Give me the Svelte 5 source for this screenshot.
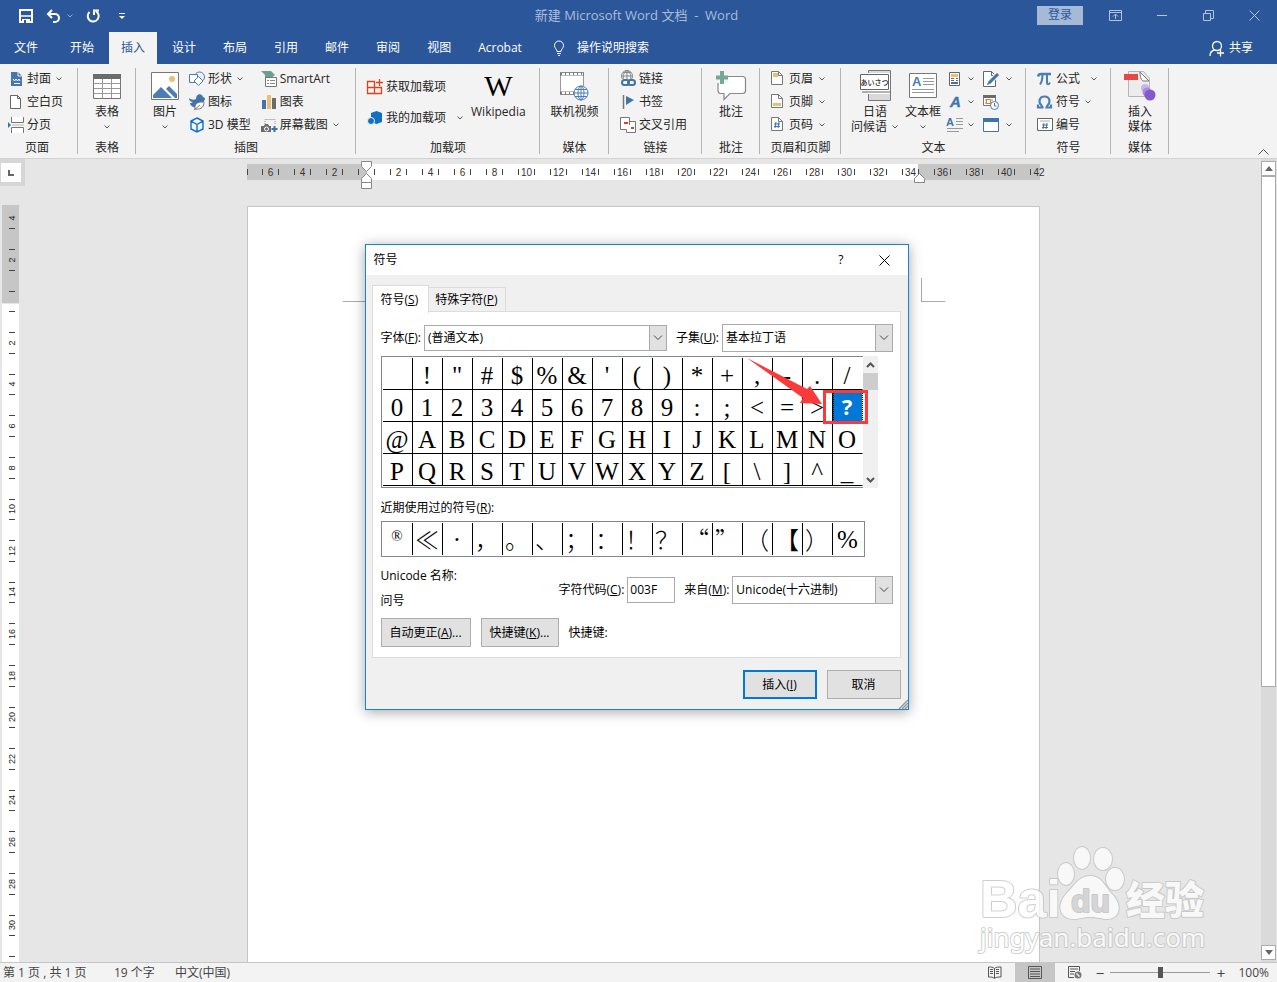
<script lang="ts">
  type Icon = { w: number; h: number; body: string };

  // name -> drawing, shared by the ribbon, the title bar and the status bar
  const icons: Record<string, Icon> = {
    save: { w: 14, h: 14, body: '<path d="M1 1h12v12H1z" fill="none" stroke="#fff" stroke-width="2"/><path d="M2 7h10" stroke="#fff" stroke-width="1.500"/><path d="M3 10h8v4H3z" fill="#fff"/><path d="M5 11h2v3H5z" fill="#2b579a"/>' },
    undo: { w: 15, h: 14, body: '<path d="M6 1 2 5l4 4M2 5h7a4 4 0 0 1 0 8H7" fill="none" stroke="#fff" stroke-width="2"/>' },
    redo: { w: 14, h: 14, body: '<path d="M3.500 3A5.500 5.500 0 1 0 10 2.300M8 6V1.500h5" fill="none" stroke="#fff" stroke-width="2"/>' },
    custom: { w: 6, h: 8, body: '<path d="M0 1.500h6" stroke="#fff"/><path d="M0 4h6L3 7z" fill="#fff"/>' },
    options: { w: 13, h: 11, body: '<path d="M.5.5h12v10H.5zM.5 2.500h12M6.500 9V4.500M4 6.500l2.500-2.500L9 6.500" fill="none" stroke="#b4c5df"/>' },
    min: { w: 11, h: 11, body: '<path d="M0 5.500h10" stroke="#b4c5df"/>' },
    restore: { w: 11, h: 11, body: '<path d="M.5 3.500h7v7h-7zM2.500 3V.5h8v8H8" fill="none" stroke="#b4c5df"/>' },
    closeApp: { w: 11, h: 11, body: '<path d="m.5.5 10 10m0-10-10 10" stroke="#b4c5df"/>' },
    bulb: { w: 12, h: 16, body: '<path d="M4 11.500C4 9 1.500 8.500 1.500 5.500a4.500 4.500 0 0 1 9 0c0 3-2.500 3.500-2.500 6zM4 13.500h4M5 15.500h2" fill="none" stroke="#fff"/>' },
    person: { w: 16, h: 17, body: '<circle cx="8" cy="6" r="4.500" fill="none" stroke="#fff" stroke-width="1.300"/><path d="M1 16c0-3 2-5.500 5-6M8 13h7M11.500 9.500v7" fill="none" stroke="#fff" stroke-width="1.300"/>' },
    cover: { w: 16, h: 16, body: '<path d="M3 1h7l4 4v10H3z" fill="#4377ad"/><path d="M10 1v4h4" fill="none" stroke="#f3f3f3"/><path d="m5 8 1.500 2L8 8l1.500 2L11 8l1 2M6 12.500h6" fill="none" stroke="#fff"/>' },
    blank: { w: 16, h: 16, body: '<path d="M2.500 1.500h7l3 3v10h-10z" fill="#fff" stroke="#666"/><path d="M9.500 1.500v3h3" fill="none" stroke="#666"/>' },
    break: { w: 16, h: 16, body: '<path d="M3.500 0v5.500h12V0M3.500 16v-5.500h12V16" fill="#fff" stroke="#777"/><path d="M4 8h12" stroke="#bbb"/><path d="m0 5 3 3-3 3z" fill="#2e75b6"/>' },
    table: { w: 28, h: 26, body: '<path d="M.5 1.500h27v24H.5z" fill="#fff" stroke="#777"/><path d="M0 1h28v5H0z" fill="#6b6b6b"/><path d="M1 10.500h26M1 15.500h26M1 20.500h26M9.500 6v19M18.500 6v19" stroke="#999"/>' },
    picture: { w: 28, h: 28, body: '<path d="M.5.5h27v27H.5z" fill="#fff" stroke="#777"/><circle cx="21" cy="7" r="3" fill="#e8bf74"/><path d="M2 26v-3l8-8 11 11z" fill="#4a7db5"/><path d="m15 17 3-3 8 8v4h-2z" fill="#4a7db5"/>' },
    shapes: { w: 16, h: 16, body: '<circle cx="10.500" cy="6" r="5" fill="#f3f3f3" stroke="#4a7db5"/><path d="M.5 3.500h8v8h-8z" fill="#fff" stroke="#4a7db5"/><path d="m9.500 5.500 4.500 4.500-4.500 4.500L5 10z" fill="#fff" stroke="#4a7db5"/>' },
    iconsPic: { w: 16, h: 16, body: '<path d="M0 4c2 2 5 2 7 1 0-6 6-6 7-2l2 1c0 5-6 7-9 10-4-1-6-3-6-5 0 0 2 0 3-1C1 8 0 6 0 4z" fill="#3f74ad"/><path d="M6 15c-1-7 5-7 9-7 0 4-2 8-9 7z" fill="#fff" stroke="#777"/><path d="m5 16 6-5" stroke="#777"/>' },
    cube: { w: 16, h: 16, body: '<path d="m8 1 6 3v8l-6 3-6-3V4zM2 4l6 3.500L14 4M8 7.500V15" fill="none" stroke="#1070c0" stroke-width="1.400"/>' },
    smartart: { w: 17, h: 16, body: '<path d="M1 0h10l4 4-4 3H8v3H5V4z" fill="#6ba08e"/><path d="M5.500 6.500h11v9h-11z" fill="#fff" stroke="#777"/><path d="M7 9.500h2M10 9.500h5M7 12.500h2M10 12.500h5" stroke="#888"/>' },
    chart: { w: 16, h: 16, body: '<path d="M1 6h4v9H1z" fill="#3f74ad"/><path d="M6 1h4v14H6z" fill="#e8bf74"/><path d="M11 4h4v11h-4z" fill="#6b6b6b"/>' },
    screenshot: { w: 16, h: 16, body: '<path d="M4 7V2.500h10V8" fill="none" stroke="#888" stroke-dasharray="1 1"/><path d="M0 9h3l1-2h3l1 2h2v6H0z" fill="#6b6b6b"/><circle cx="5.500" cy="12" r="2" fill="none" stroke="#fff"/><path d="M13.500 9v6M10.500 12h6" stroke="#2e75b6" stroke-width="2"/>' },
    getaddin: { w: 16, h: 16, body: '<path d="M.5 2.500h7v6h-7zM.5 8.500h7v6h-7zM7.500 8.500h7v6h-7zM12.500 0v7M9 3.500h7" fill="none" stroke="#d8431f" stroke-width="1.300"/>' },
    myaddin: { w: 16, h: 16, body: '<path d="m9.500 1 5.500 2v9l-5.500 2L4 12V3z" fill="#0f70c4"/><circle cx="4" cy="11" r="3.500" fill="#0f70c4" stroke="#f3f3f3"/>' },
    video: { w: 30, h: 30, body: '<path d="M1.500 1.500h23v22h-23z" fill="#fff" stroke="#999"/><path d="M1 3h24M1 22h24" stroke="#777" stroke-width="3"/><path d="M3 3h21M3 22h21" stroke="#fff" stroke-width="2" stroke-dasharray="3 1"/><circle cx="22" cy="22" r="7" fill="#fff" stroke="#4a7db5"/><ellipse cx="22" cy="22" rx="3" ry="7" fill="none" stroke="#4a7db5"/><path d="M15 22h14M16 18.500h12M16 25.500h12M22 15v14" stroke="#4a7db5"/>' },
    link: { w: 16, h: 17, body: '<circle cx="7" cy="6" r="5.500" fill="none" stroke="#888"/><path d="M1 6h12M7 0v12M3 2.500h8M4 10c-2-4 0-8 3-9.500C10 2 12 6 10 10" fill="none" stroke="#888"/><path d="M0 9h16v8H0z" fill="#f3f3f3"/><rect x="2" y="10" width="7" height="5" rx="2.500" fill="none" stroke="#3f74ad" stroke-width="2"/><rect x="8" y="10" width="7" height="5" rx="2.500" fill="none" stroke="#3f74ad" stroke-width="2"/>' },
    bookmark: { w: 16, h: 16, body: '<path d="M3.500 1v14" stroke="#777" stroke-width="1.500"/><path d="m6 2 8 4-8 5z" fill="#3f74ad"/>' },
    crossref: { w: 16, h: 16, body: '<path d="M.5.5h9v12h-9z" fill="#fff" stroke="#777"/><path d="M7.500 4.500h8v11h-9v-3" fill="#fff" stroke="#777"/><path d="M6 4h4v8H6z" fill="#fff"/><path d="M9.500 1v7" stroke="#777"/><path d="M4 5h4v2H4zM11 10h3v2h-3z" fill="#d8431f"/>' },
    comment: { w: 32, h: 30, body: '<path d="M4.500 5.500h23a3 3 0 0 1 3 3v11a3 3 0 0 1-3 3H15l-6 6v-6H5a3 3 0 0 1-2-3V9z" fill="#fff" stroke="#888" stroke-width="1.200"/><path d="M0 4h13v8H0z" fill="#f3f3f3"/><path d="M7 0v13M1 6.500h12" stroke="#74a897" stroke-width="4"/>' },
    header: { w: 12, h: 15, body: '<path d="M.5.500h7l4 4v9H.5z" fill="#fff" stroke="#777"/><path d="M2 2h5v4H2z" fill="#e8bf74"/><path d="M7.500.5v4h4" fill="none" stroke="#777"/>' },
    footer: { w: 12, h: 15, body: '<path d="M.5.500h7l4 4v9H.5z" fill="#fff" stroke="#777"/><path d="M2 9h8v3H2z" fill="#e8bf74"/><path d="M7.500.5v4h4" fill="none" stroke="#777"/>' },
    pagenum: { w: 12, h: 15, body: '<path d="M.5.500h7l4 4v9H.5z" fill="#fff" stroke="#777"/><path d="M7.500.5v4h4" fill="none" stroke="#777"/><path d="M5 5 4 11M8 5l-1 6M3 7h6M3 9.500h6" stroke="#3f74ad"/>' },
    greeting: { w: 32, h: 32, body: '<path d="M9.500.5h22v30h-22z" fill="#d9d9d9" stroke="#777"/><path d="M9 3h22v21H9z" fill="#fff"/><path d="M1.500 4.500h28v15h-28z" fill="#fff" stroke="#666"/><path d="M3 22h29" stroke="#666"/><text x="15.500" y="15" text-anchor="middle" font-size="7" font-weight="500" font-family="Noto Sans CJK JP, sans-serif" fill="#222">あいさつ</text>' },
    textbox: { w: 28, h: 26, body: '<path d="M.5.5h27v24H.5z" fill="#fff" stroke="#777"/><text x="3" y="13" font-size="13" font-weight="700" font-family="Liberation Sans, sans-serif" fill="#4a7db5">A</text><path d="M14 5.500h11M14 8.500h11M14 11.500h11M3 16.500h22M3 19.500h22" stroke="#999"/>' },
    quickparts: { w: 16, h: 16, body: '<path d="M2.500 1.500h10v13h-10z" fill="#fff" stroke="#666"/><path d="M4 3h7v3H4z" fill="#e8bf74"/><path d="M4 7.500h3M4 9.500h3M9 7.500h2M9 9.500h2" stroke="#666"/><path d="M4 11h7v2H4z" fill="#3f74ad"/>' },
    wordart: { w: 16, h: 16, body: '<text x="3" y="13" font-size="15" font-weight="700" font-style="italic" font-family="Liberation Sans, sans-serif" fill="#3f74ad" stroke="#3f74ad" stroke-width=".4">A</text>' },
    dropcap: { w: 16, h: 16, body: '<text x="-1" y="9" font-size="11" font-weight="700" font-family="Liberation Sans, sans-serif" fill="#3f74ad">A</text><path d="M9 1.500h7M9 4.500h7M9 7.500h7M0 11.500h16M0 14.500h12" stroke="#999"/>' },
    signature: { w: 16, h: 16, body: '<path d="M.5.5h8l4 4v11H.5z" fill="#fff" stroke="#666"/><path d="M8.500.5v4h4" fill="none" stroke="#666"/><path d="m14 4-8 8" stroke="#f3f3f3" stroke-width="5"/><path d="m15 3-9 9" stroke="#3f74ad" stroke-width="3"/><path d="m4 14 1-3 2 2z" fill="#3f74ad"/>' },
    datetime: { w: 16, h: 16, body: '<path d="M.5 1.500h12v10H.5z" fill="#fff" stroke="#777"/><path d="M0 1h13v3H0z" fill="#6b6b6b"/><path d="M2 6h9M2 9h9" stroke="#888" stroke-dasharray="2 1"/><path d="M3.500 5.500h4v4h-4z" fill="#fff" stroke="#d87a2a"/><circle cx="11.500" cy="11.500" r="4" fill="#fff" stroke="#4a7db5"/><path d="M11.500 9v3h2" fill="none" stroke="#4a7db5"/>' },
    object: { w: 16, h: 14, body: '<path d="M.5.5h15v13H.5z" fill="#fff" stroke="#3f74ad"/><path d="M0 0h16v4H0z" fill="#3f74ad"/>' },
    pi: { w: 16, h: 16, body: '<path d="M1 5.500C1.500 3 2.500 3 4 3h10" fill="none" stroke="#4a7db5" stroke-width="2.400"/><path d="M5.500 3c0 5-.5 8-2.500 10.500M10 3v8c0 3 2 3 3 .5" fill="none" stroke="#4a7db5" stroke-width="2"/>' },
    omega: { w: 16, h: 16, body: '<path d="M1 10.500v3h4.500c0-2-3-3-3-6C2.500 4 5 2.500 7.500 2.500S12.500 4 12.500 7.500c0 3-3 4-3 6H14v-3" fill="none" stroke="#4a7db5" stroke-width="2.200"/>' },
    number: { w: 16, h: 14, body: '<path d="M.5.5h15v12H.5z" fill="#fff" stroke="#666"/><path d="M3 3h10" stroke="#aaa"/><path d="m7 5-1 6M10 5l-1 6M5 7h6M5 9.500h6" stroke="#3f74ad"/>' },
    media: { w: 32, h: 32, body: '<path d="M4.500 1.500h15l6 7v18h-21z" fill="#ececec" stroke="#b5b5b5"/><path d="m16 2 9 9h-6c-2-1-3-5-3-9z" fill="#fff" stroke="#777"/><path d="M0 4h14v6H0z" fill="#e8474a"/><circle cx="21" cy="18" r="4" fill="#c9b5ea"/><circle cx="23" cy="22" r="4.500" fill="#ab8adf"/><circle cx="26" cy="25" r="5.500" fill="#8458cf"/>' },
    book: { w: 14, h: 13, body: '<path d="M6.500 2.500C5 1 3 1 .5 1v10c2.500 0 4.500 0 6 1.500C8 11 10 11 13 11V1c-3 0-5 0-6.500 1.500zM6.500 2v10M2 3.500h3M2 5.500h3M2 7.500h3M8 3.500h3M8 5.500h3M8 7.500h3" fill="none" stroke="#555"/>' },
    print: { w: 14, h: 13, body: '<path d="M.5.5h13v12H.5zM2 3h10M2 5.500h10M2 8h10M2 10.500h10" fill="none" stroke="#555"/>' },
    web: { w: 14, h: 13, body: '<path d="M6 11.500H.5V.5h11V5M2 3h8M2 5.500h5M2 8h4" fill="none" stroke="#555"/><circle cx="10" cy="9" r="3.500" fill="#777"/><path d="M8 8h2v2h2" stroke="#fff" fill="none"/>' },
  };

  const tabs = ["开始", "插入", "设计", "布局", "引用", "邮件", "审阅", "视图", "Acrobat"];
  let activeTab = $state("插入");

  const grid = [
    ..." !\"#$%&'()*+,-./",
    ..."0123456789:;<=>?",
    ..."@ABCDEFGHIJKLMNO",
    ..."PQRSTUVWXYZ[\\]^_",
  ];
  const recent = ["®", "≪", "·", "，", "。", "、", "；", "：", "！", "？", "“", "”", "（", "【", "）", "%"];
  let selected = $state("?");
  let code = $state("003F");
  let zoom = $state(50);

  const hRuler = [6, 4, 2, 0, ...Array.from({ length: 21 }, (_, i) => (i + 1) * 2)];
  const vRuler = Array.from({ length: 18 }, (_, i) => ({
    label: Math.abs(i - 2) * 2,
    y: Math.round(13 + i * 41.6),
  }));

  function pick(ch: string) {
    selected = ch;
    code = ch.charCodeAt(0).toString(16).toUpperCase().padStart(4, "0");
  }
</script>

{#snippet icon(name: string)}
  <svg class="icon" width={icons[name].w} height={icons[name].h} viewBox="0 0 {icons[name].w} {icons[name].h}" aria-hidden="true">
    {@html icons[name].body}
  </svg>
{/snippet}

{#snippet caret()}
  <svg class="caret" width="6" height="4" viewBox="0 0 6 4" aria-hidden="true"><path d="m.5.5 2.500 2.500L5.500.5" fill="none" stroke="currentColor" /></svg>
{/snippet}

{#snippet small(name: string, label: string, drop: boolean = false)}
  <button class="small" aria-label={label || name}>
    <span class="slot">{@render icon(name)}</span>
    {#if label}<span>{label}</span>{/if}
    {#if drop}{@render caret()}{/if}
  </button>
{/snippet}

{#snippet big(name: string, label: string, drop: boolean = false)}
  <button class="big">
    <span class="bigslot">{@render icon(name)}</span>
    <span class="biglabel">{label}</span>
    {#if drop}{@render caret()}{/if}
  </button>
{/snippet}

{#snippet arrow()}
  <span class="arrow"><svg width="10" height="6" viewBox="0 0 10 6"><path d="m1 .5 4 4 4-4" fill="none" stroke="#444" /></svg></span>
{/snippet}

<div class="app">
  <header class="title">
    <div class="qat">
      <button aria-label="保存">{@render icon("save")}</button>
      <button class="undo" aria-label="撤消">{@render icon("undo")}{@render caret()}</button>
      <button aria-label="重复">{@render icon("redo")}</button>
      <button class="custom" aria-label="自定义">{@render icon("custom")}</button>
    </div>
    <div class="doc">新建 Microsoft Word 文档  -  Word</div>
    <div class="win">
      <button class="login">登录</button>
      <button aria-label="功能区显示选项">{@render icon("options")}</button>
      <button aria-label="最小化">{@render icon("min")}</button>
      <button aria-label="还原">{@render icon("restore")}</button>
      <button aria-label="关闭">{@render icon("closeApp")}</button>
    </div>
  </header>

  <nav class="tabs">
    <button class="tab file">文件</button>
    {#each tabs as tab}
      <button class="tab" class:active={tab === activeTab} onclick={() => (activeTab = tab)}>{tab}</button>
    {/each}
    <button class="tab tell">{@render icon("bulb")}操作说明搜索</button>
    <button class="tab share">{@render icon("person")}共享</button>
  </nav>

  <section class="ribbon">
    <div class="group g-page">
      <div class="tools">
        <div class="col">
          {@render small("cover", "封面", true)}
          {@render small("blank", "空白页")}
          {@render small("break", "分页")}
        </div>
      </div>
      <div class="name">页面</div>
    </div>
    <div class="group g-table">
      <div class="tools mid">{@render big("table", "表格", true)}</div>
      <div class="name">表格</div>
    </div>
    <div class="group g-illus">
      <div class="tools">
        {@render big("picture", "图片", true)}
        <div class="col">
          {@render small("shapes", "形状", true)}
          {@render small("iconsPic", "图标")}
          {@render small("cube", "3D 模型")}
        </div>
        <div class="col second">
          {@render small("smartart", "SmartArt")}
          {@render small("chart", "图表")}
          {@render small("screenshot", "屏幕截图", true)}
        </div>
      </div>
      <div class="name">插图</div>
    </div>
    <div class="group g-addin">
      <div class="tools">
        <div class="col two">
          {@render small("getaddin", "获取加载项")}
          {@render small("myaddin", "我的加载项", true)}
        </div>
        <button class="big">
          <span class="bigslot wiki">W</span>
          <span class="biglabel">Wikipedia</span>
        </button>
      </div>
      <div class="name">加载项</div>
    </div>
    <div class="group g-video">
      <div class="tools mid">{@render big("video", "联机视频")}</div>
      <div class="name">媒体</div>
    </div>
    <div class="group g-link">
      <div class="tools">
        <div class="col">
          {@render small("link", "链接")}
          {@render small("bookmark", "书签")}
          {@render small("crossref", "交叉引用")}
        </div>
      </div>
      <div class="name">链接</div>
    </div>
    <div class="group g-table">
      <div class="tools mid">{@render big("comment", "批注")}</div>
      <div class="name">批注</div>
    </div>
    <div class="group g-head">
      <div class="tools">
        <div class="col">
          {@render small("header", "页眉", true)}
          {@render small("footer", "页脚", true)}
          {@render small("pagenum", "页码", true)}
        </div>
      </div>
      <div class="name">页眉和页脚</div>
    </div>
    <div class="group g-text">
      <div class="tools">
        <button class="big greet">
          <span class="bigslot">{@render icon("greeting")}</span>
          <span class="biglabel">日语</span>
          <span class="biglabel last">问候语{@render caret()}</span>
        </button>
        {@render big("textbox", "文本框", true)}
        <div class="col">
          {@render small("quickparts", "", true)}
          {@render small("wordart", "", true)}
          {@render small("dropcap", "", true)}
        </div>
        <div class="col objs">
          {@render small("signature", "", true)}
          {@render small("datetime", "")}
          {@render small("object", "", true)}
        </div>
      </div>
      <div class="name">文本</div>
    </div>
    <div class="group g-sym">
      <div class="tools">
        <div class="col">
          <div class="wide">{@render small("pi", "公式", true)}</div>
          {@render small("omega", "符号", true)}
          {@render small("number", "编号")}
        </div>
      </div>
      <div class="name">符号</div>
    </div>
    <div class="group g-media">
      <div class="tools mid">
        <button class="big">
          <span class="bigslot">{@render icon("media")}</span>
          <span class="biglabel">插入</span>
          <span class="biglabel">媒体</span>
        </button>
      </div>
      <div class="name">媒体</div>
    </div>
    <button class="collapse" aria-label="折叠功能区">
      <svg width="11" height="6" viewBox="0 0 11 6"><path d="m.5 5.500 5-5 5 5" fill="none" stroke="#555" /></svg>
    </button>
  </section>

  <main class="work">
    <div class="left">
      <div class="corner"><span><svg width="6" height="6" viewBox="0 0 6 6"><path d="M1 0v5h5" fill="none" stroke="#666" stroke-width="2" /></svg></span></div>
      <svg class="vruler" width="17" height="757">
        <rect width="17" height="98" fill="#c6c6c6" />
        <rect y="99" width="17" height="658" fill="#fff" />
        {#each vRuler as mark}
          {#if mark.label}
            <text transform="translate(13 {mark.y}) rotate(-90)" text-anchor="middle">{mark.label}</text>
          {/if}
          <path d="M7 {mark.y + 10}.5h6M7 {mark.y + 31}.5h6" stroke="#444" />
        {/each}
      </svg>
    </div>
    <div class="canvas">
      <div class="hruler">
        <i class="lead"></i>
        {#each hRuler as n, i}
          <span class="unit" class:end={i === hRuler.length - 1}>{n || ""}</span>
        {/each}
        <svg class="indent" width="13" height="28" viewBox="0 0 13 28"><path d="M1.500.5h10v5l-5 5-5-5zM6.500 12.500l5 5v4h-10v-4zM1.500 21.500h10v6h-10z" fill="#fff" stroke="#888" /></svg>
        <svg class="indent right" width="13" height="10" viewBox="0 0 13 10"><path d="m6.500.5 5 5v4h-10v-4z" fill="#fff" stroke="#888" /></svg>
      </div>
      <div class="page">
        <i class="crop tl"></i>
        <i class="crop tr"></i>
      </div>
    </div>
    <div class="scroll">
      <button aria-label="向上滚动"><svg width="8" height="5" viewBox="0 0 8 5"><path d="M0 5h8L4 0z" fill="#666" /></svg></button>
      <div class="thumb"></div>
      <button aria-label="向下滚动"><svg width="8" height="5" viewBox="0 0 8 5"><path d="M0 0h8L4 5z" fill="#666" /></svg></button>
    </div>
  </main>

  <footer class="status">
    <span class="pages">第 1 页 , 共 1 页</span>
    <span class="words">19 个字</span>
    <span>中文(中国)</span>
    <div class="views">
      <button aria-label="阅读视图">{@render icon("book")}</button>
      <button class="on" aria-label="页面视图">{@render icon("print")}</button>
      <button aria-label="Web 版式视图">{@render icon("web")}</button>
    </div>
    <button class="step" aria-label="缩小">−</button>
    <input class="zoom" type="range" aria-label="缩放" bind:value={zoom} />
    <button class="step" aria-label="放大">+</button>
    <span class="pct">100%</span>
  </footer>

  <div class="dialog" role="dialog" aria-label="符号">
    <div class="dtitle">
      <span>符号</span>
      <button aria-label="帮助">?</button>
      <button aria-label="关闭"><svg width="11" height="11" viewBox="0 0 11 11"><path d="m.5.5 10 10m0-10-10 10" stroke="#000" /></svg></button>
    </div>
    <div class="dbody">
      <div class="dtabs">
        <button class="dtab on">符号(<u>S</u>)</button>
        <button class="dtab">特殊字符(<u>P</u>)</button>
      </div>
      <div class="panel">
        <div class="line fonts">
          <label for="font">字体(<u>F</u>):</label>
          <div class="select font"><select id="font"><option>(普通文本)</option></select>{@render arrow()}</div>
          <label for="subset">子集(<u>U</u>):</label>
          <div class="select tall grow"><select id="subset"><option>基本拉丁语</option></select>{@render arrow()}</div>
        </div>
        <div class="chars">
          <div class="grid">
            {#each grid as ch}
              <button class="cell" class:sel={ch === selected} onclick={() => pick(ch)}>{ch}</button>
            {/each}
          </div>
          <div class="cscroll">
            <button aria-label="向上"><svg width="9" height="6" viewBox="0 0 9 6"><path d="m1 5 3.500-3.500L8 5" fill="none" stroke="#555" stroke-width="2" /></svg></button>
            <div class="cthumb"></div>
            <button aria-label="向下"><svg width="9" height="6" viewBox="0 0 9 6"><path d="m1 1 3.500 3.500L8 1" fill="none" stroke="#555" stroke-width="2" /></svg></button>
          </div>
          <div class="frame"></div>
          <svg class="pointer" width="76" height="48" viewBox="0 0 76 48"><path d="M0 0 60 31l3-3 12 18-22-1 3-5z" fill="#f93b3b" /></svg>
        </div>
        <div class="rlabel">近期使用过的符号(<u>R</u>):</div>
        <div class="recent">
          {#each recent as ch, i}
            <button class="cell" class:reg={i === 0} class:latin={i === 2 || i === 15} onclick={() => pick(ch)}>{ch}</button>
          {/each}
        </div>
        <div class="line info">
          <div class="uname"><span>Unicode 名称:</span><span>问号</span></div>
          <label for="code">字符代码(<u>C</u>):</label>
          <input id="code" class="code" bind:value={code} />
          <label for="from">来自(<u>M</u>):</label>
          <div class="select tall from"><select id="from"><option>Unicode(十六进制)</option></select>{@render arrow()}</div>
        </div>
        <div class="line keys">
          <button class="btn auto">自动更正(<u>A</u>)...</button>
          <button class="btn">快捷键(<u>K</u>)...</button>
          <span>快捷键:</span>
        </div>
      </div>
      <div class="actions">
        <button class="btn primary">插入(<u>I</u>)</button>
        <button class="btn">取消</button>
      </div>
      <svg class="grip" width="10" height="10" viewBox="0 0 10 10"><path d="m1 10 9-9M4 10l6-6M7 10l3-3" stroke="#999" stroke-width="1.500" /></svg>
    </div>
  </div>

  <svg class="mark" width="240" height="115" viewBox="0 0 240 115">
    <g fill="#fff" stroke="#c0c0c0" stroke-width="2" stroke-linejoin="round" paint-order="stroke">
      <text x="6" y="72" font-family="Liberation Sans, sans-serif" font-weight="700" font-size="52">Bai</text>
      <ellipse cx="92" cy="29" rx="8" ry="11" />
      <ellipse cx="108" cy="13" rx="8" ry="11" />
      <ellipse cx="129" cy="14" rx="9" ry="11" />
      <ellipse cx="141" cy="34" rx="9" ry="11" />
      <path d="M116 31c12 0 14 10 22 18 10 10 9 24-4 25-7 0-10-2-18-2s-10 2-17 2c-15-1-16-16-6-26 8-8 12-17 23-17z" />
      <text class="du" x="97" y="67" font-family="Liberation Sans, sans-serif" font-weight="700" font-size="32">du</text>
      <text x="152" y="69" font-family="Noto Sans CJK SC, sans-serif" font-weight="900" font-size="39">经验</text>
      <text x="6" y="102" font-family="Noto Sans, sans-serif" font-size="26">jingyan.baidu.com</text>
    </g>
  </svg>
</div>

<style>
  :global(body) {
    margin: 0;
  }
  .app {
    position: relative;
    display: flex;
    flex-direction: column;
    height: 100vh;
    overflow: hidden;
    background: #e6e6e6;
    color: #262626;
    font: 12px/16px "Open Sans", "Noto Sans CJK SC", sans-serif;
  }
  button {
    border: 0;
    padding: 0;
    background: none;
    color: inherit;
    font: inherit;
    white-space: nowrap;
  }
  .icon,
  .caret {
    display: block;
    flex: none;
    overflow: visible;
  }
  .caret {
    color: #555;
  }

  .title {
    display: grid;
    grid-template-columns: 1fr auto 1fr;
    align-items: center;
    height: 32px;
    background: #2b579a;
    color: #a9bddb;
  }
  .doc {
    white-space: pre;
    padding-right: 4px;
    padding-bottom: 2px;
    font-size: 13px;
  }
  .qat {
    display: flex;
    align-items: center;
    gap: 13px;
    padding-left: 19px;
  }
  .qat .undo {
    display: flex;
    align-items: center;
    gap: 6px;
  }
  .qat .caret {
    color: #8fa9cf;
  }
  .qat .custom {
    margin-left: 6px;
  }
  .win {
    display: flex;
    justify-content: flex-end;
    align-items: center;
    gap: 35px;
    padding-right: 17px;
    padding-bottom: 2px;
  }
  .win .login {
    width: 46px;
    height: 19px;
    margin-right: -9px;
    background: #a6b9d6;
    color: #2b579a;
  }

  .tabs {
    display: flex;
    gap: 3px;
    height: 32px;
    background: #2b579a;
    color: #fff;
  }
  .tab {
    padding: 0 12px;
  }
  .tab.file {
    padding: 0 17px 0 14px;
  }
  .tab.active {
    background: #f3f3f3;
    color: #2b579a;
  }
  .tell,
  .share {
    display: flex;
    align-items: center;
    gap: 12px;
  }
  .tell {
    margin-left: 4px;
  }
  .share {
    gap: 4px;
    margin-left: auto;
    padding-right: 24px;
  }

  .ribbon {
    display: flex;
    height: 94px;
    flex: none;
    background: #f3f3f3;
    border-bottom: 1px solid #d2d2d2;
  }
  .group {
    box-sizing: border-box;
    position: relative;
    display: flex;
    flex-direction: column;
    flex: none;
    padding-top: 3px;
  }
  .group::after {
    content: "";
    position: absolute;
    right: 0;
    top: 4px;
    bottom: 4px;
    width: 1px;
    background: #b5b5b5;
  }
  .tools {
    display: flex;
    height: 73px;
  }
  .tools.mid {
    justify-content: center;
  }
  .name {
    text-align: center;
  }
  .col {
    display: flex;
    flex-direction: column;
  }
  .small {
    display: flex;
    align-items: center;
    gap: 3px;
    height: 23px;
  }
  .small .caret {
    margin-left: 2px;
  }
  .slot {
    display: flex;
    justify-content: center;
    width: 16px;
  }
  .big {
    display: flex;
    flex-direction: column;
    align-items: center;
  }
  .bigslot {
    display: flex;
    align-items: center;
    height: 37px;
  }
  .biglabel {
    position: relative;
    line-height: 15px;
  }
  .big > .caret {
    margin-top: 6px;
  }
  .biglabel.last .caret {
    position: absolute;
    left: calc(100% + 5px);
    top: 6px;
  }
  .g-page {
    width: 78px;
    padding-left: 8px;
  }
  .g-page .name {
    padding-right: 12px;
  }
  .g-table,
  .g-media {
    width: 58px;
  }
  .g-illus {
    width: 220px;
  }
  .g-illus .big {
    width: 44px;
    margin: 0 2px 0 7px;
  }
  .second {
    margin-left: 10px;
  }
  .g-addin {
    width: 184px;
  }
  .g-addin .tools {
    padding-left: 11px;
    gap: 8px;
  }
  .two {
    padding-top: 4px;
  }
  .two .small {
    height: 31px;
  }
  .two .caret {
    margin-left: 8px;
  }
  .wiki {
    font: 30px/37px "Liberation Serif", serif;
    color: #000;
  }
  .g-video {
    width: 69px;
  }
  .g-link {
    width: 93px;
  }
  .g-link .tools {
    padding-left: 11px;
  }
  .g-head {
    width: 81px;
  }
  .g-head .tools {
    padding-left: 9px;
  }
  .g-head .small {
    gap: 4px;
  }
  .g-text {
    width: 185px;
  }
  .g-text .tools {
    padding-left: 10px;
  }
  .greet {
    width: 48px;
    margin-right: 6px;
  }
  .greet .last {
    margin-right: 12px;
  }
  .g-text .col {
    margin-left: 6px;
  }
  .g-text .col.objs {
    margin-left: 9px;
  }
  .g-text .objs .caret {
    margin-left: 4px;
  }
  .g-sym {
    width: 85px;
  }
  .g-sym .tools {
    padding-left: 11px;
  }
  .wide .caret {
    margin-left: 8px;
  }
  .collapse {
    align-self: flex-end;
    margin: 0 8px 3px auto;
    line-height: 0;
  }

  .work {
    display: flex;
    flex: 1;
    min-height: 0;
  }
  .left {
    width: 26px;
    flex: none;
  }
  .corner {
    box-sizing: border-box;
    width: 25px;
    height: 27px;
    padding: 4px 4px 4px 1px;
    background: #d6d6d6;
  }
  .corner span {
    display: flex;
    align-items: center;
    justify-content: center;
    height: 19px;
    background: #fdfdfd;
  }
  .vruler {
    display: block;
    margin: 19px 0 0 2px;
    font: 9px "Liberation Sans", sans-serif;
    fill: #222;
  }
  .canvas {
    flex: 1;
    display: flex;
    flex-direction: column;
    align-items: center;
    overflow: hidden;
  }
  .hruler {
    position: relative;
    display: flex;
    align-items: center;
    flex: none;
    width: 793px;
    height: 16px;
    margin-top: 5px;
    background: linear-gradient(90deg, #c6c6c6 120px, #fff 120px 671px, #c6c6c6 671px);
    color: #333;
  }
  .lead {
    flex: none;
    width: 1px;
    height: 6px;
    margin-right: 14px;
    background: #444;
  }
  .unit {
    box-sizing: border-box;
    flex: none;
    width: 17px;
    height: 6px;
    margin-right: 15px;
    border: solid #444;
    border-width: 0 1px;
    font: 10px/8px "Liberation Sans", sans-serif;
    display: flex;
    justify-content: center;
  }
  .unit.end {
    border-right: 0;
    margin-right: 0;
  }
  .indent {
    position: absolute;
    left: 113px;
    top: -3px;
  }
  .indent.right {
    left: 666px;
    top: 9px;
  }
  .page {
    position: relative;
    box-sizing: border-box;
    width: 793px;
    flex: 1;
    margin-top: 26px;
    background: #fff;
    border: 1px solid #c6c6c6;
    border-bottom: 0;
  }
  .crop {
    position: absolute;
    top: 71px;
    width: 23px;
    height: 23px;
    border: solid #aaa;
  }
  .tl {
    left: 95px;
    border-width: 0 1px 1px 0;
  }
  .tr {
    right: 94px;
    border-width: 0 0 1px 1px;
  }
  .scroll {
    display: flex;
    flex-direction: column;
    flex: none;
    width: 15px;
    padding: 2px 1px 2px 0;
    background: linear-gradient(#dadada, #dadada) 0 0 / 15px 100% no-repeat;
  }
  .scroll button {
    box-sizing: border-box;
    height: 15px;
    border: 1px solid #ababab;
    background: #fff;
    line-height: 0;
    display: flex;
    align-items: center;
    justify-content: center;
  }
  .scroll button:last-child {
    margin-top: auto;
  }
  .thumb {
    box-sizing: border-box;
    height: 64%;
    background: #fff;
    border: 1px solid #ababab;
  }

  .status {
    display: flex;
    align-items: center;
    flex: none;
    gap: 19px;
    height: 19px;
    padding: 0 8px 0 3px;
    background: #f3f3f3;
    border-top: 1px solid #c6c6c6;
    color: #444;
  }
  .pages {
    min-width: 92px;
  }
  .words {
    min-width: 42px;
  }
  .views {
    display: flex;
    align-self: stretch;
    margin-left: auto;
    margin-right: -13px;
  }
  .views button {
    width: 40px;
    display: flex;
    align-items: center;
    justify-content: center;
  }
  .views .on {
    background: #c6c6c6;
  }
  .step {
    width: 11px;
    margin: 0 -7px;
    font-size: 15px;
  }
  .zoom {
    appearance: none;
    width: 100px;
    height: 12px;
    margin: 0 -7px;
    background: linear-gradient(#999, #999) center / 100% 1px no-repeat;
  }
  .zoom::-webkit-slider-thumb {
    appearance: none;
    width: 5px;
    height: 11px;
    background: #555;
  }

  .dialog {
    position: absolute;
    left: calc(50% - 274px);
    top: 244px;
    box-sizing: border-box;
    width: 544px;
    border: 1px solid #1883d7;
    background: #f0f0f0;
    color: #000;
    box-shadow: 0 2px 12px rgba(0, 0, 0, 0.35);
  }
  .dtitle {
    display: flex;
    align-items: center;
    height: 30px;
    padding: 0 18px 0 8px;
    background: #fff;
    gap: 35px;
  }
  .dtitle span {
    margin-right: auto;
  }
  .dtitle button {
    line-height: 0;
  }
  .dbody {
    position: relative;
    padding: 9px 7px 10px 6px;
  }
  .dtabs {
    display: flex;
    align-items: flex-end;
    height: 28px;
  }
  .dtab {
    box-sizing: border-box;
    height: 25px;
    padding: 0 7px 0 6px;
    border: 1px solid #dcdcdc;
    border-left: 0;
  }
  .dtab.on {
    position: relative;
    height: 28px;
    margin-bottom: -1px;
    padding: 0 10px 0 8px;
    border-left: 1px solid #dcdcdc;
    border-bottom: 0;
    background: #fff;
    z-index: 1;
  }
  .panel {
    box-sizing: border-box;
    height: 347px;
    margin-top: -1px;
    padding: 12px 7px 10px 8px;
    background: #fff;
    border: 1px solid #dcdcdc;
  }
  .line {
    display: flex;
    align-items: center;
  }
  .fonts {
    height: 28px;
    gap: 3px;
  }
  .select {
    position: relative;
    box-sizing: border-box;
    height: 26px;
    border: 1px solid #ababab;
  }
  .select select {
    appearance: none;
    width: 100%;
    height: 100%;
    padding: 0 20px 0 3px;
    border: 0;
    background: #fff;
    font: inherit;
    color: inherit;
  }
  .select.tall {
    height: 28px;
  }
  .select.grow {
    flex: 1;
  }
  .select.font {
    width: 243px;
    margin-right: 6px;
  }
  .arrow {
    position: absolute;
    top: 0;
    right: 0;
    bottom: 0;
    width: 16px;
    display: flex;
    align-items: center;
    justify-content: center;
    background: #e1e1e1;
    border: solid #ababab;
    border-width: 0 0 0 1px;
    pointer-events: none;
  }
  .chars {
    position: relative;
    display: flex;
    margin-top: 4px;
  }
  .grid {
    display: grid;
    grid-template-columns: repeat(16, 30px);
    grid-auto-rows: 32px;
    padding: 1px 0 1px 1px;
    border: 1px solid #828790;
    border-right: 0;
  }
  .cell {
    border-right: 1px solid #000;
    border-bottom: 1px solid #000;
    color: #000;
    font: 25px/30px "Liberation Serif", serif;
    padding-top: 3px;
    height: 32px;
  }
  .grid .cell:nth-child(16n) {
    border-right-color: transparent;
  }
  .cell.sel {
    background: #0078d7 padding-box;
    color: #fff;
    font: bold 22px/28px "Noto Sans", sans-serif;
    outline: 1px dotted #000;
    outline-offset: -1px;
    padding: 0;
  }
  .cscroll {
    display: flex;
    flex-direction: column;
    width: 15px;
    background: #f0f0f0;
  }
  .cscroll button {
    height: 17px;
    line-height: 0;
  }
  .cthumb {
    height: 17px;
    margin-bottom: auto;
    background: #cdcdcd;
  }
  .frame {
    position: absolute;
    left: 442px;
    top: 34px;
    width: 39px;
    height: 28px;
    border: 3px solid #f93b3b;
  }
  .pointer {
    position: absolute;
    left: 366px;
    top: 2px;
  }
  .rlabel {
    margin: 12px 0 5px;
  }
  .recent {
    box-sizing: border-box;
    display: grid;
    grid-template-columns: repeat(16, 30px);
    width: 484px;
    height: 36px;
    padding: 1px;
    border: 1px solid #828790;
  }
  .recent .cell {
    display: flex;
    justify-content: center;
    border-bottom: 0;
    padding: 0;
    font: 24px/32px "Noto Sans CJK SC", sans-serif;
    font-weight: 300;
  }
  .recent .cell.latin {
    font: 25px/34px "Liberation Serif", serif;
  }
  .recent .cell:last-child {
    border-right: 0;
  }
  .recent .cell.reg {
    font: 15px/26px "Liberation Serif", serif;
  }
  .info {
    height: 50px;
    margin-top: 8px;
    gap: 3px;
  }
  .uname {
    display: flex;
    flex-direction: column;
    gap: 9px;
    width: 175px;
    margin-bottom: 4px;
  }
  .code {
    box-sizing: border-box;
    width: 48px;
    height: 26px;
    margin-right: 6px;
    padding: 0 2px 2px;
    border: 1px solid #ababab;
    font: inherit;
  }
  .from {
    flex: 1;
  }
  .keys {
    margin-top: 3px;
    gap: 10px;
  }
  .btn {
    box-sizing: border-box;
    width: 78px;
    height: 29px;
    background: #e1e1e1;
    border: 1px solid #adadad;
  }
  .btn.auto {
    width: 90px;
  }
  .actions {
    display: flex;
    justify-content: flex-end;
    gap: 10px;
    margin-top: 12px;
  }
  .actions .btn {
    width: 74px;
  }
  .btn.primary {
    border: 2px solid #0078d7;
  }
  .grip {
    position: absolute;
    right: 0;
    bottom: 0;
  }
  .mark {
    position: absolute;
    right: 63px;
    bottom: 22px;
    opacity: 0.75;
    pointer-events: none;
  }
  .du {
    fill: #d0d0d0;
  }
</style>
